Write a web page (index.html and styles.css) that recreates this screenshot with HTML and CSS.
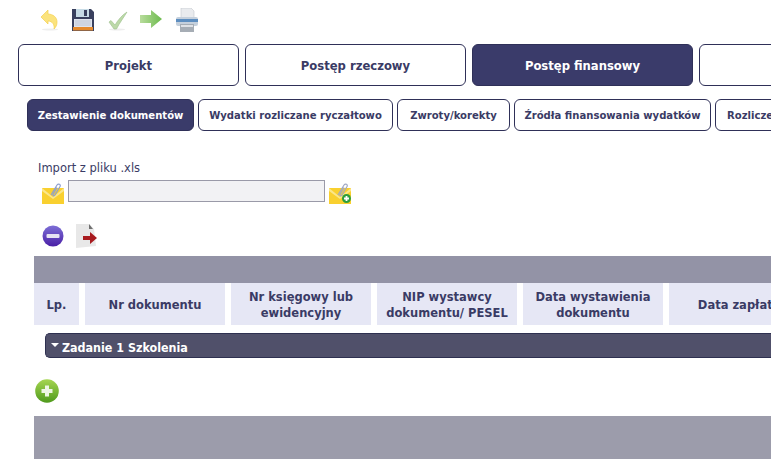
FILE: index.html
```html
<!DOCTYPE html>
<html lang="pl">
<head>
<meta charset="utf-8">
<title>Postęp finansowy</title>
<link rel="stylesheet" href="styles.css">
</head>
<body>
<div class="page">
  <div class="toolbar">
    <svg class="tool t-undo" width="18" height="22" viewBox="0 0 18 22"><ellipse cx="10" cy="20.500" rx="8" ry="1" fill="#eee"/><path d="M1 8 8 1v4c5 .3 9 3 9 8 0 3-1 5-3 7 .8-4-1.500-8-6-8v3z" fill="#fbe37d" stroke="#f3d050" stroke-width=".7"/></svg>
    <svg class="tool t-save" width="22" height="22" viewBox="0 0 22 22"><path d="M0 0h19l3 3v19H0z" fill="#39405e"/><rect x="4" y="0" width="13" height="8" fill="#c7dbe6"/><rect x="12" y="1" width="3" height="6" fill="#39405e"/><rect x="2" y="10" width="18" height="8" fill="#dfe4ee"/><path d="M3 12h16M3 14h16M3 16h16" stroke="#b5bccd" stroke-width=".8"/><rect x="1" y="18" width="20" height="3.500" fill="#e58a2e"/></svg>
    <svg class="tool t-check" width="20" height="20" viewBox="0 0 20 20"><ellipse cx="9" cy="18.500" rx="8" ry="1" fill="#eee"/><path d="M1 11l2-1.500 4 4.500C10 9 14 4 19 1c-3 5-7.500 11-10.500 17H6z" fill="#bcd9a8" stroke="#9cc08c" stroke-width=".6"/></svg>
    <svg class="tool t-next" width="22" height="20" viewBox="0 0 22 20"><defs><linearGradient id="ga" x1="0" x2="1" y1="0" y2="0"><stop offset="0" stop-color="#b8dc9c"/><stop offset="1" stop-color="#6dbb4e"/></linearGradient></defs><path d="M0 5h11V0l11 9-11 9v-5H0z" fill="url(#ga)"/></svg>
    <svg class="tool t-print" width="22" height="24" viewBox="0 0 22 24"><path d="M5 0h10l3 3v8H5z" fill="#e9ebee" stroke="#c4c8cf" stroke-width=".6"/><rect x="0" y="9" width="22" height="9" rx="2" fill="#c5d0dc"/><rect x="0" y="11" width="22" height="3" fill="#5d8ec0"/><rect x="4" y="16" width="14" height="8" fill="#a6adb5"/><rect x="5" y="17" width="12" height="2" fill="#dfe2e6"/></svg>
  </div>

  <nav class="tabs">
    <a class="tab">Projekt</a>
    <a class="tab">Postęp rzeczowy</a>
    <a class="tab tab-on">Postęp finansowy</a>
    <a class="tab"></a>
  </nav>

  <nav class="subtabs">
    <a class="sub sub-on">Zestawienie dokumentów</a>
    <a class="sub">Wydatki rozliczane ryczałtowo</a>
    <a class="sub">Zwroty/korekty</a>
    <a class="sub">Źródła finansowania wydatków</a>
    <a class="sub">Rozliczenie</a>
  </nav>

  <section class="import">
    <div class="import-label">Import z pliku .xls</div>
    <div class="import-row">
      <svg class="env" width="22" height="21" viewBox="0 0 22 21"><rect y="5" width="22" height="16" fill="#f9d02f"/><path d="M0 5l11 9 11-9v3l-11 8L0 8z" fill="#fbe68a"/><path d="M9 12 15 2c1.500-2 4-.5 3 1.500L13 12c-1 1.500-2.500.5-2-.5l4-7" fill="none" stroke="#8d9fcf" stroke-width="1.200"/></svg>
      <div class="file-input"></div>
      <svg class="env" width="22" height="21" viewBox="0 0 22 21"><rect y="5" width="22" height="16" fill="#f9d02f"/><path d="M0 5l11 9 11-9v3l-11 8L0 8z" fill="#fbe68a"/><path d="M9 12 15 2c1.500-2 4-.5 3 1.500L13 12c-1 1.500-2.500.5-2-.5l4-7" fill="none" stroke="#a0a8c4" stroke-width="1.200"/><circle cx="17.500" cy="15.500" r="4.500" fill="#2e9e3c"/><path d="M15 15.500h5M17.500 13v5" stroke="#fff" stroke-width="1.800"/></svg>
    </div>
  </section>

  <div class="actions">
    <svg width="22" height="22" viewBox="0 0 22 22"><defs><linearGradient id="gm" x1="0" x2="0" y1="0" y2="1"><stop offset="0" stop-color="#7d6fd6"/><stop offset="1" stop-color="#4a1fa6"/></linearGradient></defs><circle cx="11" cy="11" r="10.500" fill="url(#gm)"/><rect x="4.500" y="9" width="13" height="4" rx="1" fill="#e6e2f2"/></svg>
    <svg width="23" height="24" viewBox="0 0 23 24"><path d="M0 0h13l5 5 2 17-20 2z" fill="#e8e8e8"/><path d="M13 0l4 5h-4z" fill="#6f6f6f"/><path d="M7 12h7V8l7 6-7 6v-4H7z" fill="#a81b1f"/></svg>
  </div>

  <section class="grid">
    <div class="band"></div>
    <div class="head">
      <div class="th th-lp">Lp.</div>
      <div class="th">Nr dokumentu</div>
      <div class="th">Nr księgowy lub<br>ewidencyjny</div>
      <div class="th">NIP wystawcy<br>dokumentu/ PESEL</div>
      <div class="th">Data wystawienia<br>dokumentu</div>
      <div class="th">Data zapłaty</div>
    </div>
    <div class="task"><span class="caret"></span>Zadanie 1 Szkolenia</div>
  </section>

  <svg class="add" width="24" height="24" viewBox="0 0 24 24"><defs><linearGradient id="gp" x1="0" x2="0" y1="0" y2="1"><stop offset="0" stop-color="#a6d651"/><stop offset="1" stop-color="#4f9a1c"/></linearGradient></defs><circle cx="12" cy="12" r="11.800" fill="url(#gp)"/><path d="M12 6.500v11M6.500 12h11" stroke="#eef6e4" stroke-width="4"/></svg>

  <div class="band-bottom"></div>
</div>
</body>
</html>
```

FILE: styles.css
```css
html, body {
  margin: 0;
  padding: 0;
  background: #fff;
}

.page {
  width: 771px;
  height: 459px;
  overflow: hidden;
  font-family: "DejaVu Sans", Verdana, sans-serif;
  color: #3a3b65;
}

.toolbar {
  display: flex;
  align-items: flex-start;
  height: 44px;
  padding-left: 40px;
  box-sizing: border-box;
}

.tool { flex: none; }
.t-undo { margin-top: 9px; }
.t-save { margin-top: 9px; margin-left: 14px; }
.t-check { margin-top: 11px; margin-left: 14px; }
.t-next { margin-top: 10px; margin-left: 12px; }
.t-print { margin-top: 8px; margin-left: 14px; }

.tabs {
  display: flex;
  gap: 6px;
  padding-left: 18px;
  height: 42px;
}

.tab {
  flex: none;
  width: 221px;
  box-sizing: border-box;
  border: 1px solid #2f3058;
  border-radius: 6px;
  display: flex;
  align-items: center;
  justify-content: center;
  font-size: 12.900px;
  font-stretch: condensed;
  font-weight: 700;
}

.tab-on,
.sub-on {
  background: #3a3b6a;
  color: #fff;
}

.subtabs {
  display: flex;
  gap: 4px;
  margin-top: 13px;
  padding-left: 27px;
  height: 32px;
}

.sub {
  flex: none;
  box-sizing: border-box;
  border: 1px solid #2f3058;
  border-radius: 6px;
  padding: 0 11px;
  display: flex;
  align-items: center;
  white-space: nowrap;
  font-size: 11.200px;
  font-stretch: condensed;
  font-weight: 700;
}

.sub-on { width: 167px; padding: 0; justify-content: center; }
.sub:nth-child(2) { width: 195px; padding: 0; justify-content: center; }
.sub:nth-child(3) { width: 113px; padding: 0; justify-content: center; }
.sub:nth-child(4) { width: 197px; padding: 0; justify-content: center; }

.import {
  margin-top: 30px;
  padding-left: 38px;
}

.import-label {
  font-size: 11.500px;
  line-height: 14px;
}

.import-row {
  display: flex;
  align-items: flex-start;
  margin-top: 5px;
  padding-left: 4px;
}

.env { flex: none; margin-top: 3px; }

.file-input {
  flex: none;
  width: 257px;
  height: 22px;
  box-sizing: border-box;
  margin: 0 4px;
  background: #f2f2f4;
  border: 1px solid #9a9aa8;
}

.actions {
  display: flex;
  gap: 12px;
  align-items: center;
  margin-top: 20px;
  padding-left: 42px;
  height: 24px;
}

.grid {
  margin-top: 8px;
  margin-left: 34px;
}

.band {
  height: 27px;
  background: #9393a6;
}

.head {
  display: flex;
  gap: 6px;
}

.th {
  flex: none;
  width: 140px;
  height: 42px;
  box-sizing: border-box;
  padding-top: 1px;
  background: #e6e7f5;
  display: flex;
  align-items: center;
  justify-content: center;
  text-align: center;
  font-size: 11.500px;
  line-height: 16px;
  font-weight: 700;
}

.th-lp { width: 45px; }

.task {
  margin: 8px 0 0 11px;
  height: 25px;
  box-sizing: border-box;
  background: #50506a;
  border-top: 1px solid #2e3050;
  border-bottom: 1px solid #2e3050;
  border-left: 1px solid #2e3050;
  border-radius: 5px 0 0 5px;
  color: #fff;
  font-size: 12.400px;
  font-stretch: condensed;
  font-weight: 700;
  line-height: 27px;
  padding-left: 5px;
  white-space: nowrap;
}

.caret {
  display: inline-block;
  width: 0;
  height: 0;
  border-left: 4px solid transparent;
  border-right: 4px solid transparent;
  border-top: 4px solid #fff;
  margin-right: 3px;
  vertical-align: 5px;
}

.add {
  display: block;
  margin: 21px 0 0 35px;
}

.band-bottom {
  margin: 13px 0 0 34px;
  height: 43px;
  background: #9c9cab;
}
```
